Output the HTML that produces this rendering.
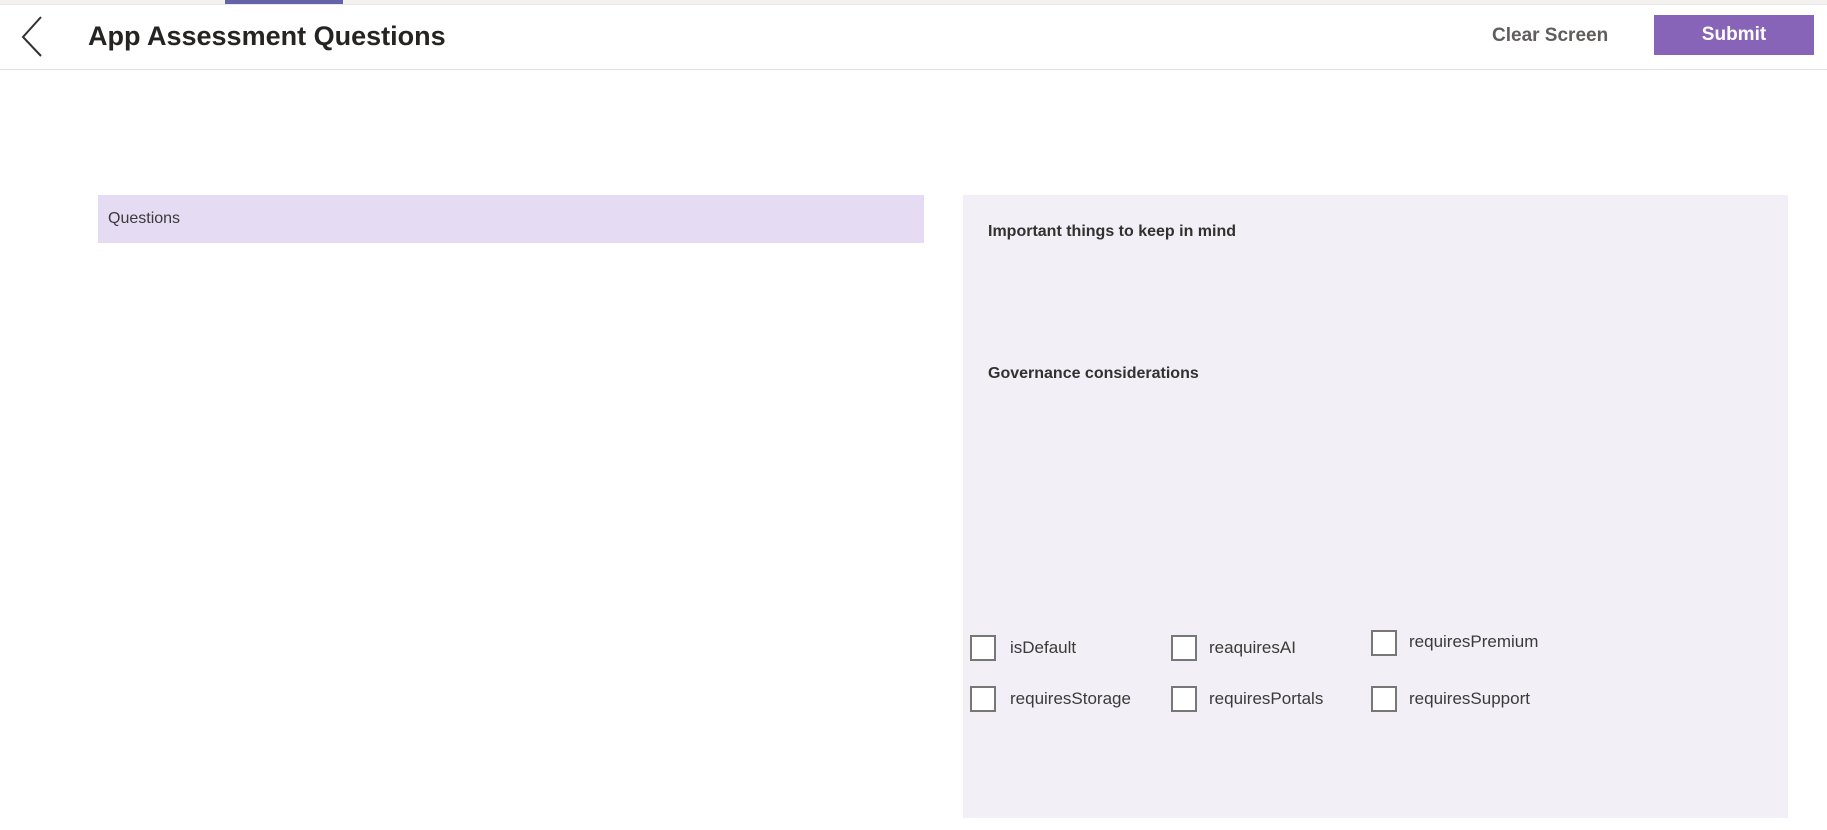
<!DOCTYPE html>
<html><head><meta charset="utf-8"><style>
*{margin:0;padding:0;box-sizing:border-box}
body{width:1827px;height:830px;background:#fff;font-family:"Segoe UI","Liberation Sans",sans-serif;position:relative;overflow:hidden;color:#323130}
.a{position:absolute}
.cb{position:absolute;width:26px;height:26px;border:2px solid #777;background:#fff}
.lb{position:absolute;font-size:17px;color:#3b3a39;line-height:20px}
</style></head><body>
<div class="a" style="left:0;top:0;width:1827px;height:5px;background:#f3f2f1;border-bottom:1px solid #e8e8e8"></div>
<div class="a" style="left:225px;top:0;width:118px;height:4px;background:#6264a7"></div>
<svg class="a" style="left:18px;top:14px" width="30" height="44"><path d="M23 3 L5 23 L23 42" fill="none" stroke="#323130" stroke-width="2"/></svg>
<div class="a" style="left:88px;top:18px;font-size:27px;font-weight:bold;line-height:36px;color:#252423">App Assessment Questions</div>
<div class="a" style="left:1492px;top:23px;font-size:19px;font-weight:bold;color:#605e5c;line-height:26px">Clear Screen</div>
<div class="a" style="left:1654px;top:15px;width:160px;height:40px;background:#8764b8;color:#fff;font-size:19px;font-weight:bold;text-align:center;line-height:40px">Submit</div>
<div class="a" style="left:0;top:69px;width:1827px;height:1px;background:#e1dfee"></div>
<div class="a" style="left:98px;top:195px;width:826px;height:48px;background:#e5dcf3;font-size:16px;line-height:48px;padding-left:10px;color:#3b3a39">Questions</div>
<div class="a" style="left:963px;top:195px;width:825px;height:623px;background:#f2eff6"></div>
<div class="a" style="left:988px;top:221px;font-size:16px;font-weight:bold;color:#323130;line-height:22px">Important things to keep in mind</div>
<div class="a" style="left:988px;top:363px;font-size:16px;font-weight:bold;color:#323130;line-height:22px">Governance considerations</div>
<div class="cb" style="left:970px;top:635px"></div><div class="lb" style="left:1010px;top:638px">isDefault</div>
<div class="cb" style="left:1171px;top:635px"></div><div class="lb" style="left:1209px;top:638px">reaquiresAI</div>
<div class="cb" style="left:1371px;top:630px"></div><div class="lb" style="left:1409px;top:632px">requiresPremium</div>
<div class="cb" style="left:970px;top:686px"></div><div class="lb" style="left:1010px;top:689px">requiresStorage</div>
<div class="cb" style="left:1171px;top:686px"></div><div class="lb" style="left:1209px;top:689px">requiresPortals</div>
<div class="cb" style="left:1371px;top:686px"></div><div class="lb" style="left:1409px;top:689px">requiresSupport</div>
</body></html>
